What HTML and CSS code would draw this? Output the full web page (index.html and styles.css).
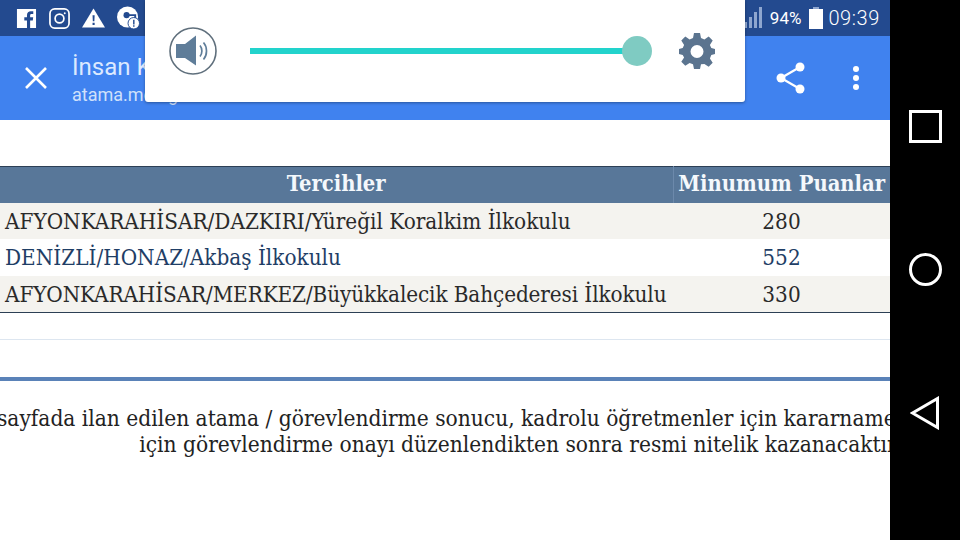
FILE: index.html
```html
<!DOCTYPE html>
<html lang="tr">
<head>
  <meta charset="UTF-8" />
  <title>İnsan Kaynakları</title>
  <link rel="stylesheet" href="styles.css">
</head>
<body>

<div class="screen">
  <div class="app">
    <div class="statusbar">
      <div class="status-left">
        <svg class="ico" width="21" height="21" viewBox="0 0 22 22"><path fill="#fff" d="M1 1h20v20h-6.200v-8h2.800l.4-3.200h-3.200V7.900c0-.9.3-1.500 1.600-1.500h1.700V3.500c-.3 0-1.300-.1-2.500-.1-2.500 0-4.100 1.500-4.100 4.200v2.200H8.700V13h2.800v8H1z"/></svg>
        <svg class="ico" width="21" height="21" viewBox="0 0 22 22" fill="none" stroke="#fff" stroke-width="1.800"><rect x="1" y="1" width="20" height="20" rx="5"/><circle cx="11" cy="11" r="4.600"/><circle cx="16.500" cy="5.500" r="1" fill="#fff" stroke="none"/></svg>
        <svg class="ico" width="23" height="20" viewBox="0 0 24 20"><path fill="#fff" d="M12 0l12 20H0z"/><path fill="#234a8f" d="M11 7h2.200l-.3 6.500h-1.600zM11 15h2.200v2.200H11z"/></svg>
        <svg class="ico" width="23" height="24" viewBox="0 0 24 24"><circle cx="11" cy="11" r="11" fill="#fff"/><circle cx="10" cy="9" r="3.200" fill="#234a8f"/><path d="M10 9h9v3" fill="none" stroke="#234a8f" stroke-width="2"/><circle cx="17.500" cy="17.500" r="6" fill="#fff" stroke="#234a8f" stroke-width="1"/><path fill="#234a8f" d="M16.800 13.800h1.500v5h-1.500zM16.800 19.600h1.500v1.500h-1.500z"/></svg>
      </div>
      <div class="status-right">
        <svg class="signal" width="18" height="22" viewBox="0 0 18 22" fill="#8ea6cf"><rect x="0" y="15" width="3" height="6"/><rect x="5" y="10" width="3" height="11"/><rect x="10" y="5" width="3" height="16"/><rect x="15" y="0" width="3" height="21"/></svg>
        <span class="pct">94%</span>
        <svg class="battery" width="14" height="22" viewBox="0 0 14 22"><path fill="#8ea6cf" d="M4 0h6v2H4z"/><rect y="2" width="14" height="20" fill="#fff"/></svg>
        <span class="clock">09:39</span>
      </div>
    </div>

    <div class="toolbar">
      <svg class="close" width="22" height="22" viewBox="0 0 22 22" stroke="#fff" stroke-width="2.600"><path d="M1 1l20 20M21 1L1 21"/></svg>
      <div class="titles">
        <div class="title">İnsan Kaynakları</div>
        <div class="url">atama.meb.gov.tr</div>
      </div>
      <svg class="share" width="30" height="32" viewBox="0 0 30 32"><circle cx="24" cy="5" r="4.500" fill="#fff"/><circle cx="5" cy="16" r="4.500" fill="#fff"/><circle cx="24" cy="27" r="4.500" fill="#fff"/><path d="M24 5L5 16l19 11" fill="none" stroke="#fff" stroke-width="2.200"/></svg>
      <div class="dots"><i></i><i></i><i></i></div>
    </div>

    <div class="content">
      <table class="results">
        <thead>
          <tr><th class="col-name">Tercihler</th><th class="col-score">Minumum Puanlar</th></tr>
        </thead>
        <tbody>
          <tr class="odd"><td>AFYONKARAHİSAR/DAZKIRI/Yüreğil Koralkim İlkokulu</td><td class="score">280</td></tr>
          <tr class="link"><td>DENİZLİ/HONAZ/Akbaş İlkokulu</td><td class="score">552</td></tr>
          <tr class="odd"><td class="long">AFYONKARAHİSAR/MERKEZ/Büyükkalecik Bahçederesi İlkokulu</td><td class="score">330</td></tr>
        </tbody>
      </table>
      <div class="thin-line"></div>
      <div class="thick-line"></div>
      <p class="note">
        Bu sayfada ilan edilen atama / görevlendirme sonucu, kadrolu öğretmenler için kararnameleri, sözleşmeliler<br>
        için görevlendirme onayı düzenlendikten sonra resmi nitelik kazanacaktır.
      </p>
    </div>
  </div>

  <div class="navbar">
    <div class="nav-square"></div>
    <div class="nav-circle"></div>
    <svg width="30" height="34" viewBox="0 0 30 34" fill="none" stroke="#fff" stroke-width="3"><path d="M27.500 2.500v29L2.500 17z"/></svg>
  </div>

  <div class="volume">
    <svg class="speaker" width="48" height="48" viewBox="0 0 48 48"><circle cx="24" cy="24" r="23" fill="#fff" stroke="#5f6f7c" stroke-width="1.600"/><path fill="#5f7d99" d="M7 17h9l11-8.500v30L16 31H7z"/><path d="M31 18.500c2.500 3 2.500 8 0 11M34.500 15.500c4 4.500 4 12.500 0 17" fill="none" stroke="#5f7d99" stroke-width="1.700"/></svg>
    <div class="slider"><div class="slider-knob"></div></div>
    <svg class="gear" width="36" height="36" viewBox="0 0 36 36"><path fill="#5b748f" fill-rule="evenodd" d="M15 0h6l1 5 3.400 1.400L29.700 3.600l4 4-2.800 4.300L32.300 15l3.700 1v5l-3.700 1-1.400 3.400 2.800 4.300-4 4-4.300-2.800L22 31.300 21 36h-6l-1-4.700-3.400-1.400-4.300 2.800-4-4 2.800-4.300L3.700 22 0 21v-5l3.700-1 1.400-3.100-2.800-4.300 4-4 4.300 2.800L14 5zM18 12a6.500 6.500 0 1 0 0 13 6.500 6.500 0 0 0 0-13z"/></svg>
  </div>
</div>

</body>
</html>
```

FILE: styles.css
```css
html, body {
  margin: 0;
  padding: 0;
  background: #000;
}
.screen {
  position: relative;
  width: 960px;
  height: 540px;
  display: flex;
  overflow: hidden;
}
.app {
  width: 890px;
  height: 540px;
  background: #fff;
  overflow: hidden;
  display: flex;
  flex-direction: column;
}
.statusbar {
  height: 36px;
  background: #234a8f;
  display: flex;
  justify-content: space-between;
  align-items: center;
  padding: 0 10px 0 16px;
  color: #fff;
  font-family: Roboto, sans-serif;
}
.status-left {
  display: flex;
  align-items: center;
  gap: 12px;
}
.status-right {
  display: flex;
  align-items: center;
}
.pct {
  font-size: 17px;
  margin: 0 8px 0 8px;
}
.clock {
  font-size: 20px;
  font-weight: 300;
  letter-spacing: 0.6px;
  margin-left: 5px;
}
.toolbar {
  height: 84px;
  background: #4082ef;
  display: flex;
  align-items: center;
  padding: 0 31px 0 25px;
  color: #fff;
  font-family: Roboto, sans-serif;
}
.close {
  margin-right: 25px;
}
.titles {
  flex: 1;
  padding-top: 3px;
}
.title {
  font-size: 24px;
  color: #dce9ff;
  line-height: 30px;
}
.url {
  font-size: 18px;
  color: #cfe0fb;
  line-height: 26px;
}
.share {
  margin-right: 47px;
}
.dots {
  display: flex;
  flex-direction: column;
  gap: 3px;
}
.dots i {
  width: 6px;
  height: 6px;
  border-radius: 50%;
  background: #fff;
}
.content {
  flex: 1;
  padding-top: 46px;
  font-family: "DejaVu Serif Condensed", "DejaVu Serif", serif;
  color: #2a2a2a;
}
.results {
  width: 890px;
  border-collapse: collapse;
  table-layout: fixed;
  border-top: 1px solid #2c3f55;
  border-bottom: 1px solid #2c3f55;
  font-size: 22.3px;
}
.results th {
  height: 36px;
  padding: 0 0 2px;
  background: #587799;
  color: #f4f8fc;
  font-size: 21.8px;
  font-weight: bold;
  text-align: center;
  box-sizing: border-box;
}
.col-name {
  width: 673px;
  border-right: 1px solid #6c89ab;
}
.results td {
  height: 36.6px;
  padding: 0 0 0 5px;
  white-space: nowrap;
}
.results td.long {
  letter-spacing: -0.11px;
}
.results td.score {
  text-align: center;
  padding: 0;
}
.odd td {
  background: #f4f3ef;
}
.link td {
  color: #1f3e66;
}
.thin-line {
  height: 1px;
  background: #dde6f0;
  margin-top: 26px;
}
.thick-line {
  height: 4px;
  background: #5a82b8;
  margin-top: 37px;
}
.note {
  width: 1300px;
  margin: 24px 0 0 -130px;
  font-size: 22.5px;
  line-height: 26px;
  text-align: center;
  white-space: nowrap;
  color: #222;
}
.navbar {
  width: 70px;
  background: #000;
  display: flex;
  flex-direction: column;
  align-items: center;
  padding-top: 110px;
  gap: 110px;
  box-sizing: border-box;
}
.nav-square {
  width: 27px;
  height: 27px;
  border: 3px solid #fff;
}
.nav-circle {
  width: 27px;
  height: 27px;
  border: 3px solid #fff;
  border-radius: 50%;
}
.volume {
  position: absolute;
  left: 145px;
  top: 0;
  width: 600px;
  height: 102px;
  background: #fff;
  border-radius: 0 0 3px 3px;
  box-shadow: 0 1px 3px rgba(0,0,0,0.35);
  display: flex;
  align-items: center;
  box-sizing: border-box;
  padding-left: 24px;
}
.slider {
  position: relative;
  width: 387px;
  height: 6px;
  background: #22d3cc;
  margin-left: 33px;
}
.slider-knob {
  position: absolute;
  right: -15px;
  top: -12px;
  width: 30px;
  height: 30px;
  border-radius: 50%;
  background: #7fcbc2;
}
.gear {
  margin-left: 42px;
}
```
